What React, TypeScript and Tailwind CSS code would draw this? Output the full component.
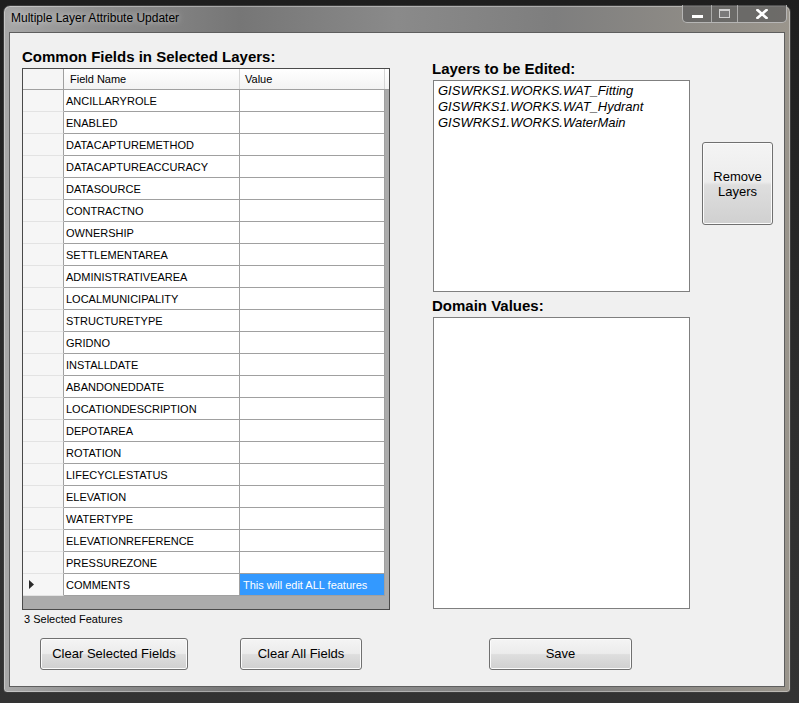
import React from 'react';

const fields = [
  'ANCILLARYROLE',
  'ENABLED',
  'DATACAPTUREMETHOD',
  'DATACAPTUREACCURACY',
  'DATASOURCE',
  'CONTRACTNO',
  'OWNERSHIP',
  'SETTLEMENTAREA',
  'ADMINISTRATIVEAREA',
  'LOCALMUNICIPALITY',
  'STRUCTURETYPE',
  'GRIDNO',
  'INSTALLDATE',
  'ABANDONEDDATE',
  'LOCATIONDESCRIPTION',
  'DEPOTAREA',
  'ROTATION',
  'LIFECYCLESTATUS',
  'ELEVATION',
  'WATERTYPE',
  'ELEVATIONREFERENCE',
  'PRESSUREZONE',
  'COMMENTS',
];

const layers = ['GISWRKS1.WORKS.WAT_Fitting', 'GISWRKS1.WORKS.WAT_Hydrant', 'GISWRKS1.WORKS.WaterMain'];

const btn =
  'rounded-[3px] border border-[#707070] bg-[linear-gradient(to_bottom,#f4f4f4_0%,#ececec_48%,#dedede_52%,#d0d0d0_100%)] shadow-[inset_0_0_0_1px_#fbfbfb] text-[13px] text-black';

const App: React.FC = () => {
  return (
    <div className="w-[799px] h-[703px] overflow-hidden bg-[linear-gradient(to_bottom,#1e1e1e,#2e2e2e_60%,#333333)] pt-[5px] pl-[3px] font-['Liberation_Sans',Arial,sans-serif]">
      {/* Window */}
      <div className="w-[788px] h-[688px] flex flex-col rounded-t-[7px] rounded-b-[4px] border border-[#3c3c3c] bg-[linear-gradient(to_right,#a8a8a8_0%,#8e8e8e_12%,#767676_30%,#8a8a8a_50%,#7e7e7e_70%,#9a958c_100%)] px-[5px] pb-[5px] shadow-[inset_0_0_0_1px_rgba(255,255,255,0.35)]">
        {/* Title bar */}
        <div className="h-[26px] flex items-start">
          <div className="pl-[2px] h-[26px] leading-[26px] -mt-[1px] text-[12px] text-black [text-shadow:0_0_6px_rgba(255,255,255,0.7)]">
            Multiple Layer Attribute Updater
          </div>
          <div className="ml-auto -mr-[2px] -mt-[1px] flex h-[18px] rounded-b-[5px] border border-t-0 border-[#d8d8d8]/70 bg-[#5a5a5a]/70 overflow-hidden">
            <div className="w-[29px] flex items-center justify-center border-r border-[#d8d8d8]/60">
              <div className="w-[11px] h-[3px] mt-[6px] bg-white" />
            </div>
            <div className="w-[26px] flex items-center justify-center border-r border-[#d8d8d8]/60">
              <div className="w-[11px] h-[9px] border-[1.5px] border-t-[2.5px] border-[#d0d0d0] bg-[#7a7a7a]" />
            </div>
            <div className="w-[48px] flex items-center justify-center">
              <svg width="12" height="10" viewBox="0 0 12 10">
                <path d="M1.5 1 L10.5 9 M10.5 1 L1.5 9" stroke="#fff" strokeWidth="2.6" strokeLinecap="square" />
              </svg>
            </div>
          </div>
        </div>

        {/* Client area */}
        <div className="flex-1 border border-[#5e5e5e] bg-[#f0f0f0] pt-[12px] pl-[12px] flex flex-col">
          <div className="flex items-start">
            {/* Left column */}
            <div className="w-[368px] flex flex-col">
              <div className="h-[23px] leading-[23px] text-[15px] font-bold text-black">
                Common Fields in Selected Layers:
              </div>
              <div className="h-[542px] border border-[#4a4a4a] bg-[#ababab] flex flex-col">
                {/* Header */}
                <div className="flex h-[21px] border-b border-[#a0a0a0] bg-[linear-gradient(to_bottom,#ffffff,#f3f3f3)] text-[11px] leading-[20px] text-black">
                  <div className="w-[41px] border-r border-[#a0a0a0] bg-[#f5f5f5]" />
                  <div className="w-[176px] border-r border-[#d5d5d5] pl-[6px]">Field Name</div>
                  <div className="w-[145px] border-r border-[#d5d5d5] pl-[5px]">Value</div>
                </div>
                {fields.map((f, i) => {
                  const last = i === fields.length - 1;
                  return (
                    <div key={f} className="flex h-[22px] text-[11px] leading-[21px] text-black">
                      <div className="w-[41px] border-r border-[#a0a0a0] border-b border-b-[#e3e3e3] bg-[#f6f6f6] flex items-center pl-[6px]">
                        {last && (
                          <svg width="5" height="9" viewBox="0 0 5 9">
                            <path d="M0 0 L5 4.5 L0 9 Z" fill="#2a2a2a" />
                          </svg>
                        )}
                      </div>
                      <div className="w-[176px] border-r border-b border-[#a0a0a0] bg-white pl-[2px] pt-[1px]">{f}</div>
                      <div
                        className={
                          last
                            ? 'w-[145px] border-r border-b border-[#a0a0a0] bg-[#3399ff] text-white pl-[3px] pt-[1px] whitespace-nowrap'
                            : 'w-[145px] border-r border-b border-[#a0a0a0] bg-white'
                        }
                      >
                        {last ? 'This will edit ALL features' : ''}
                      </div>
                    </div>
                  );
                })}
              </div>
              <div className="mt-[2px] h-[14px] leading-[14px] pl-[2px] text-[11px] text-black">3 Selected Features</div>
            </div>

            {/* Right column */}
            <div className="ml-[43px] mt-[12px] w-[257px] flex flex-col">
              <div className="h-[23px] leading-[23px] -ml-[1px] text-[15px] font-bold text-black">Layers to be Edited:</div>
              <div className="h-[212px] border border-[#7f7f7f] bg-white pl-[4px] pt-[2px]">
                {layers.map((l) => (
                  <div key={l} className="h-[16px] leading-[16px] text-[13px] italic text-black">
                    {l}
                  </div>
                ))}
              </div>
              <div className="mt-[2px] h-[23px] leading-[23px] -ml-[1px] text-[15px] font-bold text-black">Domain Values:</div>
              <div className="h-[292px] border border-[#7f7f7f] bg-white" />
            </div>

            <button className={`${btn} ml-[12px] mt-[97px] w-[71px] h-[83px] leading-[15px]`}>
              Remove
              <br />
              Layers
            </button>
          </div>

          {/* Bottom buttons */}
          <div className="flex mt-[12px]">
            <button className={`${btn} ml-[18px] w-[148px] h-[32px]`}>Clear Selected Fields</button>
            <button className={`${btn} ml-[52px] w-[122px] h-[32px]`}>Clear All Fields</button>
            <button className={`${btn} ml-[127px] w-[143px] h-[32px]`}>Save</button>
          </div>
        </div>
      </div>
    </div>
  );
};

export default App;
